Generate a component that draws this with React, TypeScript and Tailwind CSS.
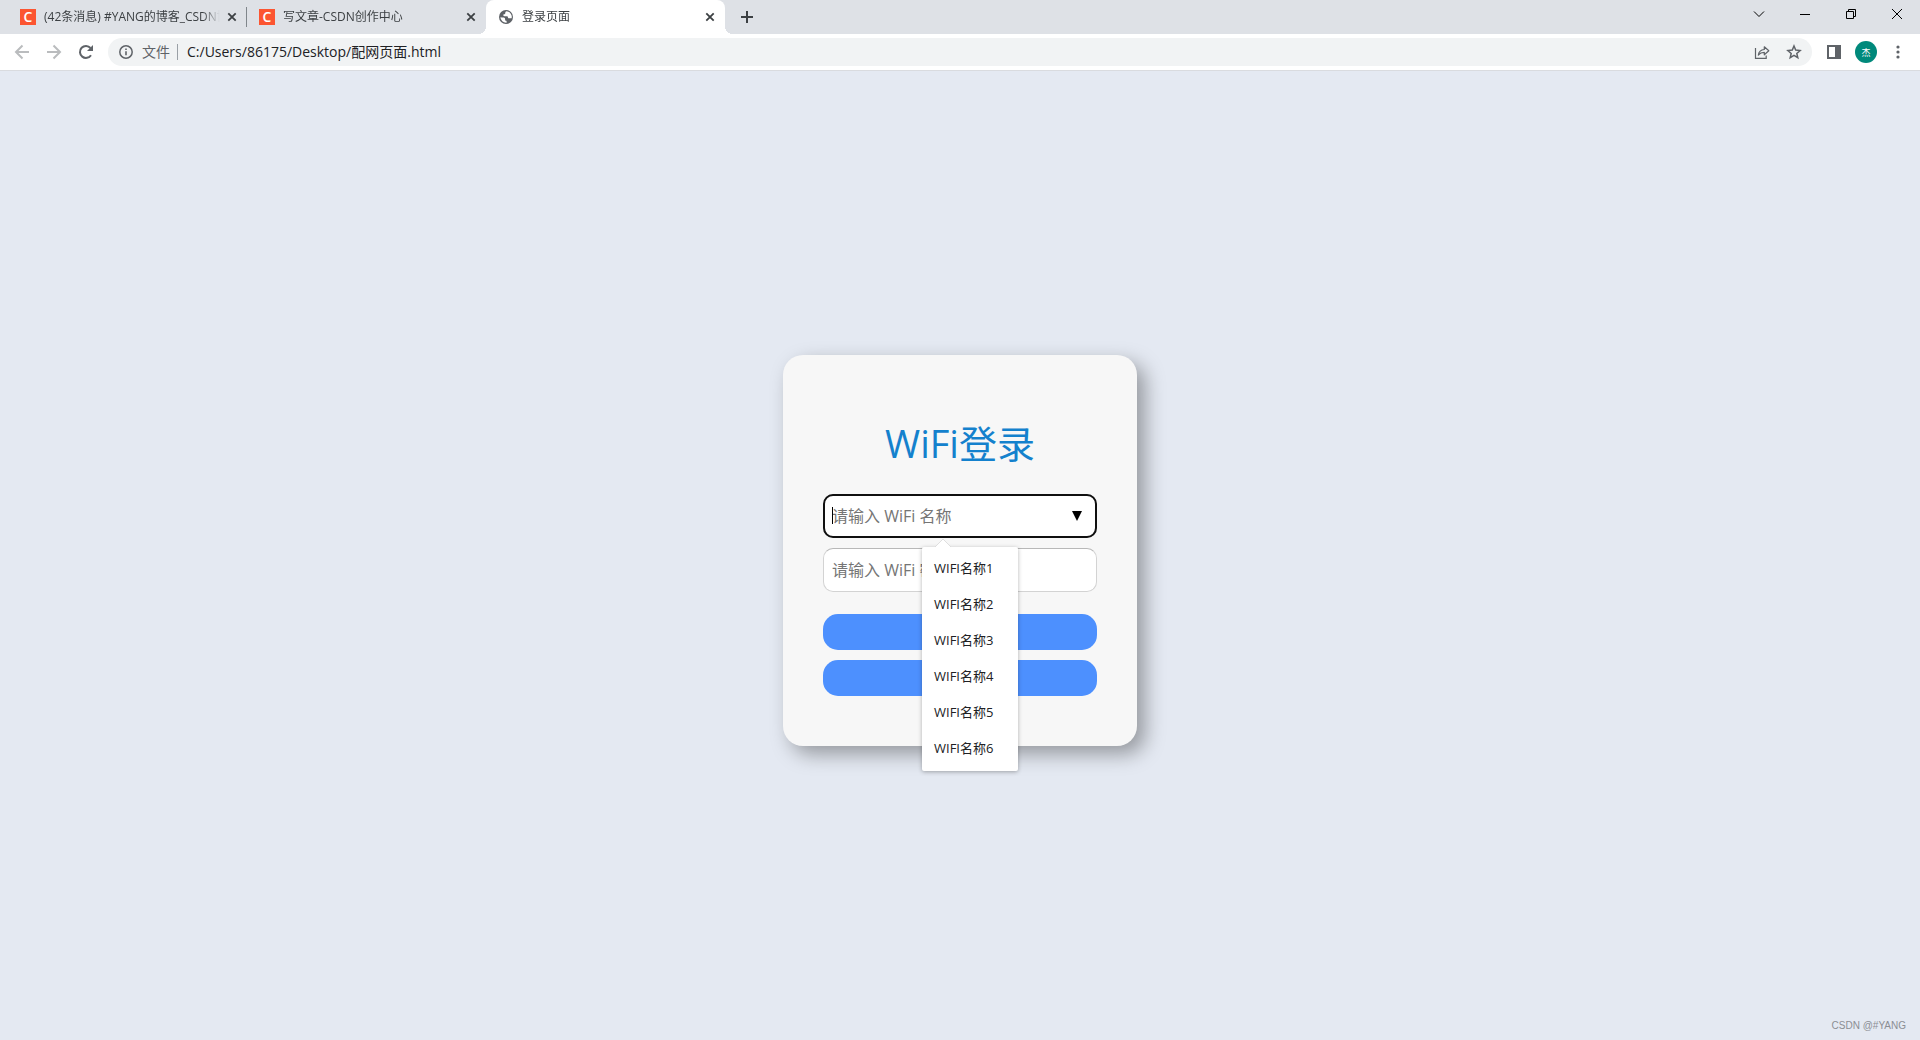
import type { ReactNode } from "react";

const wifiNames = ["WIFI名称1", "WIFI名称2", "WIFI名称3", "WIFI名称4", "WIFI名称5", "WIFI名称6"];

function CsdnIcon() {
    return (
        <span className="flex h-4 w-4 shrink-0 items-center justify-center bg-[#fc5531] text-sm leading-4 font-semibold text-white">
            C
        </span>
    );
}

function GlobeIcon() {
    return (
        <svg viewBox="0 0 16 16" className="h-4 w-4 shrink-0">
            <circle cx="8" cy="8" r="7" fill="#5f6368" />
            <path
                d="M8.6 2.3c-.8.3-1.3.8-1.3 1.6 0 .9-.5 1.2-1.3 1.3-.6.1-.8.5-.7 1.1.1.6.6.9 1.3.9h2c.9 0 1.3.5 1.4 1.2.1.6.4.9 1 .9h2.6a5.6 5.6 0 0 0-5-7z"
                fill="#fff"
            />
            <path d="M2.4 8.2c1 .1 2.1.2 3.3.4.9.2 1.4.7 1.4 1.5v1c0 .5.3.7.8.7.6 0 .8.4.7 1v.9A5.7 5.7 0 0 1 2.4 8.2z" fill="#fff" />
        </svg>
    );
}

function CloseIcon() {
    return (
        <svg viewBox="0 0 16 16" className="h-4 w-4" fill="none" stroke="#3c4043" strokeWidth="1.8">
            <path d="M4.3 4.3l7.4 7.4M11.7 4.3l-7.4 7.4" />
        </svg>
    );
}

function Tab({ icon, title, active, divider }: { icon: ReactNode; title: string; active?: boolean; divider?: boolean }) {
    return (
        <div
            className={`relative flex h-full w-[239px] min-w-0 items-center pr-[7px] pl-3 ${
                active ? "rounded-t-lg bg-white" : ""
            }`}
        >
            {active && (
                <>
                    <span className="absolute bottom-0 -left-2 h-2 w-2 bg-[radial-gradient(circle_at_0_0,#dee1e6_8px,white_8px)]" />
                    <span className="absolute -right-2 bottom-0 h-2 w-2 bg-[radial-gradient(circle_at_100%_0,#dee1e6_8px,white_8px)]" />
                </>
            )}
            {icon}
            <span className="mr-1 ml-2 flex-1 overflow-hidden mask-r-from-90% text-xs whitespace-nowrap text-[#3c4043]">
                {title}
            </span>
            <button aria-label="关闭标签页" className="shrink-0">
                <CloseIcon />
            </button>
            {divider && <span className="absolute right-0 h-5 w-px bg-[#80868b]" />}
        </div>
    );
}

function WindowButton({ label, children }: { label: string; children: ReactNode }) {
    return (
        <button aria-label={label} className="flex h-7 w-[46px] items-center justify-center">
            <svg viewBox="0 0 12 12" className="h-3 w-3" fill="none" stroke="#000">
                {children}
            </svg>
        </button>
    );
}

function ToolButton({ label, children }: { label: string; children: ReactNode }) {
    return (
        <button aria-label={label} className="flex h-7 w-7 shrink-0 items-center justify-center">
            {children}
        </button>
    );
}

function TabStrip() {
    return (
        <div className="flex h-[34px] justify-between bg-[#dee1e6] pl-2">
            <div className="flex h-full items-center">
                <Tab icon={<CsdnIcon />} title="(42条消息) #YANG的博客_CSDN博客" divider />
                <Tab icon={<CsdnIcon />} title="写文章-CSDN创作中心" />
                <Tab icon={<GlobeIcon />} title="登录页面" active />
                <button aria-label="新标签页" className="ml-2 flex h-7 w-7 items-center justify-center">
                    <svg viewBox="0 0 12 12" className="h-3 w-3" fill="none" stroke="#3c4043" strokeWidth="2">
                        <path d="M6 0v12M0 6h12" />
                    </svg>
                </button>
            </div>
            <div className="flex">
                <WindowButton label="搜索标签页">
                    <path d="M1 3.5l5 5 5-5" />
                </WindowButton>
                <WindowButton label="最小化">
                    <path d="M1 6.5h10" />
                </WindowButton>
                <WindowButton label="还原">
                    <path d="M1.5 3.5h7v7h-7zM3.5 3.5v-2h7v7h-2" />
                </WindowButton>
                <WindowButton label="关闭">
                    <path d="M1 1l10 10M11 1L1 11" />
                </WindowButton>
            </div>
        </div>
    );
}

function Toolbar() {
    return (
        <div className="flex h-[37px] items-center gap-1 border-b border-[#d9dbdf] bg-white px-2">
            <ToolButton label="后退">
                <svg viewBox="0 0 16 16" className="h-4 w-4" fill="none" stroke="#babcbe" strokeWidth="2">
                    <path d="M15 8H2.5M8.5 1.5L2 8l6.5 6.5" />
                </svg>
            </ToolButton>
            <ToolButton label="前进">
                <svg viewBox="0 0 16 16" className="h-4 w-4" fill="none" stroke="#babcbe" strokeWidth="2">
                    <path d="M1 8h12.5M7.5 1.5L14 8l-6.5 6.5" />
                </svg>
            </ToolButton>
            <ToolButton label="重新加载">
                <svg viewBox="0 0 16 16" className="h-4 w-4">
                    <path d="M13 11.2A6 6 0 1 1 12.5 4" fill="none" stroke="#5f6368" strokeWidth="2" />
                    <path d="M15 1v6H9z" fill="#5f6368" />
                </svg>
            </ToolButton>
            <div className="mx-1 flex h-7 flex-1 items-center rounded-full bg-[#f1f3f4] pr-1 pl-[10px]">
                <svg viewBox="0 0 16 16" className="h-4 w-4 shrink-0" fill="none" stroke="#5f6368" strokeWidth="1.5">
                    <circle cx="8" cy="8" r="6.2" />
                    <path d="M8 7.2v4M8 4.5v1.5" strokeWidth="1.6" />
                </svg>
                <span className="ml-2 text-sm text-[#5f6368]">文件</span>
                <span className="mr-[9px] ml-[7px] h-4 w-px bg-[#9aa0a6]" />
                <input
                    aria-label="地址栏"
                    className="min-w-0 flex-1 bg-transparent text-sm text-[#202124] outline-none"
                    defaultValue="C:/Users/86175/Desktop/配网页面.html"
                />
                <div className="flex gap-1">
                    <ToolButton label="分享">
                        <svg viewBox="0 0 16 16" className="h-4 w-4" fill="none" stroke="#5f6368" strokeWidth="1.2">
                            <path d="M1.5 4v10.4h10.7v-2.9" />
                            <path d="M4.3 11c.5-3.3 2.5-5.3 6-5.5V2.8l4.5 4-4.5 4V8.3c-2.6 0-4.5.9-6 2.7z" strokeLinejoin="round" />
                        </svg>
                    </ToolButton>
                    <ToolButton label="收藏">
                        <svg viewBox="0 0 16 16" className="h-4 w-4" fill="none" stroke="#5f6368" strokeWidth="1.5">
                            <path d="M8 2l1.7 4.1 4.4.4-3.3 2.9 1 4.3L8 11.4l-3.8 2.3 1-4.3-3.3-2.9 4.4-.4z" />
                        </svg>
                    </ToolButton>
                </div>
            </div>
            <ToolButton label="侧边栏">
                <svg viewBox="0 0 16 16" className="h-4 w-4" fill="#5f6368">
                    <path fillRule="evenodd" d="M1 1h14v14H1zM3 3v10h6V3z" />
                </svg>
            </ToolButton>
            <ToolButton label="个人资料">
                <span className="flex h-[22px] w-[22px] items-center justify-center rounded-full bg-[#00897b] text-[9px] leading-none text-white">
                    杰
                </span>
            </ToolButton>
            <ToolButton label="菜单">
                <svg viewBox="0 0 16 16" className="h-4 w-4" fill="#5f6368">
                    <circle cx="8" cy="3" r="1.6" />
                    <circle cx="8" cy="8" r="1.6" />
                    <circle cx="8" cy="13" r="1.6" />
                </svg>
            </ToolButton>
        </div>
    );
}

function WifiOptions() {
    return (
        <div className="absolute top-[53px] left-[99px] z-10 w-24">
            <ul role="listbox" aria-label="WiFi 名称" className="rounded-xs bg-white py-1 shadow-[0_1px_4px_rgba(0,0,0,0.3)]">
                {wifiNames.map((name) => (
                    <li key={name} role="option" aria-selected={false} className="flex h-9 items-center px-3 text-[13px] text-[#202124]">
                        {name}
                    </li>
                ))}
            </ul>
            <svg viewBox="0 0 18 9" className="absolute -top-2 left-3 h-[9px] w-[18px]">
                <path d="M0 9l9-9 9 9z" fill="#fff" />
                <path d="M1 8l8-8 8 8" fill="none" stroke="#ccc" strokeWidth="0.6" />
            </svg>
        </div>
    );
}

function LoginForm() {
    return (
        <form className="rounded-[20px] bg-[#f7f7f7] px-10 pt-16 pb-[50px] shadow-[8px_8px_20px_rgba(0,0,0,0.35)]">
            <h1 className="mb-[27px] text-center text-[38px] leading-[48px] text-[#1481cd]">WiFi登录</h1>
            <div className="relative mb-[10px]">
                <input
                    aria-label="WiFi 名称"
                    placeholder="请输入 WiFi 名称"
                    className="block h-11 w-[274px] rounded-[10px] border border-[#ccc] bg-white px-2 text-base outline-2 -outline-offset-2 outline-[#101010] placeholder:text-[#757575]"
                />
                <span className="absolute top-[13px] left-[9px] h-[17px] w-px bg-black" />
                <svg viewBox="0 0 10 10" className="absolute top-[17px] right-[15px] h-[10px] w-[10px]">
                    <path d="M0 0h10L5 10z" fill="#000" />
                </svg>
                <WifiOptions />
            </div>
            <input
                aria-label="WiFi 密码"
                placeholder="请输入 WiFi 密码"
                className="mb-[22px] block h-11 w-full rounded-[10px] border border-[#d3d3d3] border-t-[#b8b8b8] bg-white px-2 text-base outline-none placeholder:text-[#757575]"
            />
            <button type="button" aria-label="登录" className="mb-[10px] block h-9 w-full rounded-[15px] bg-[#4d90fe]" />
            <button type="button" aria-label="重置" className="block h-9 w-full rounded-[15px] bg-[#4d90fe]" />
        </form>
    );
}

export default function App() {
    return (
        <div className="flex min-h-screen flex-col bg-[#e4e9f2] font-['Open_Sans','Noto_Sans_CJK_SC',sans-serif]">
            <TabStrip />
            <Toolbar />
            <main className="relative flex flex-1 items-center justify-center pb-[10px]">
                <LoginForm />
                <span className="absolute right-[14px] bottom-[6px] font-['Liberation_Sans',sans-serif] text-[10px] leading-4 text-[#8b8e94]">
                    CSDN @#YANG
                </span>
            </main>
        </div>
    );
}
